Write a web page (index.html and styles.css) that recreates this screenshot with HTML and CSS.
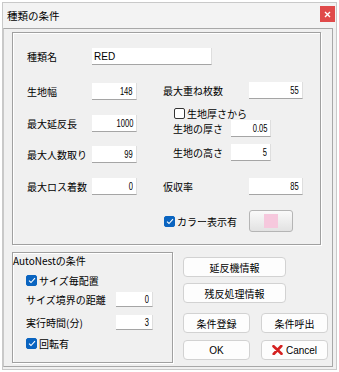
FILE: index.html
```html
<!DOCTYPE html>
<html lang="ja">
<head>
<meta charset="utf-8">
<title>種類の条件</title>
<link rel="stylesheet" href="styles.css">
</head>
<body>
<div class="window">
  <div class="titlebar">
    <span class="title">種類の条件</span>
    <span class="close"><svg width="7" height="7" viewBox="0 0 7 7"><path d="M1 1L6 6M6 1L1 6" stroke="#fff" stroke-width="1.4"/></svg></span>
  </div>
  <div class="client">
    <div class="group top">
      <div class="row name-row">
        <span class="lbl w65">種類名</span>
        <span class="inp wide left">RED</span>
      </div>
      <div class="cols">
        <div class="col left-col">
          <div class="row r1"><span class="lbl w65">生地幅</span><span class="inp w45"><span class="num">148</span></span></div>
          <div class="row r2"><span class="lbl w65">最大延反長</span><span class="inp w45"><span class="num">1000</span></span></div>
          <div class="row r3"><span class="lbl w65">最大人数取り</span><span class="inp w45"><span class="num">99</span></span></div>
          <div class="row r4"><span class="lbl w65">最大ロス着数</span><span class="inp w45"><span class="num">0</span></span></div>
        </div>
        <div class="col right-col">
          <div class="row q1"><span class="lbl w86">最大重ね枚数</span><span class="inp w54"><span class="num">55</span></span></div>
          <div class="row q2 sub"><span class="cb"></span><span class="cbl">生地厚さから</span></div>
          <div class="row q3 sub"><span class="lbl w58">生地の厚さ</span><span class="inp w40"><span class="num">0.05</span></span></div>
          <div class="row q4 sub"><span class="lbl w58">生地の高さ</span><span class="inp w40"><span class="num">5</span></span></div>
          <div class="row q5"><span class="lbl w86">仮収率</span><span class="inp w54"><span class="num">85</span></span></div>
          <div class="row q6">
            <span class="cb on"><svg width="8" height="7" viewBox="0 0 8 7"><path d="M1 3.6L3 5.5L7 1.2" fill="none" stroke="#fff" stroke-width="1.1"/></svg></span>
            <span class="cbl w75">カラー表示有</span>
            <span class="colorbtn"><span class="swatch"></span></span>
          </div>
        </div>
      </div>
    </div>
    <div class="bottom">
      <div class="group autonest">
        <div class="gtitle">AutoNestの条件</div>
        <div class="row a1"><span class="cb on"><svg width="8" height="7" viewBox="0 0 8 7"><path d="M1 3.6L3 5.5L7 1.2" fill="none" stroke="#fff" stroke-width="1.1"/></svg></span><span class="cbl">サイズ毎配置</span></div>
        <div class="row a2"><span class="lbl w90">サイズ境界の距離</span><span class="inp w37 sm"><span class="num">0</span></span></div>
        <div class="row a3"><span class="lbl w90">実行時間(分)</span><span class="inp w37 sm"><span class="num">3</span></span></div>
        <div class="row a4"><span class="cb on"><svg width="8" height="7" viewBox="0 0 8 7"><path d="M1 3.6L3 5.5L7 1.2" fill="none" stroke="#fff" stroke-width="1.1"/></svg></span><span class="cbl">回転有</span></div>
      </div>
      <div class="buttons">
        <button class="btn long b1">延反機情報</button>
        <button class="btn long b2">残反処理情報</button>
        <div class="pair p1">
          <button class="btn short">条件登録</button>
          <button class="btn short">条件呼出</button>
        </div>
        <div class="pair p2">
          <button class="btn short latin">OK</button>
          <button class="btn short latin cancel"><svg class="xicon" width="11" height="10" viewBox="0 0 11 10"><path d="M1.5 1.2L9.5 8.8M9.3 1L1.7 9" stroke="#d42020" stroke-width="2.6" stroke-linecap="round"/></svg>Cancel</button>
        </div>
      </div>
    </div>
  </div>
</div>
</body>
</html>
```
FILE: styles.css
```css
* { box-sizing: border-box; }
body {
  margin: 0;
  background: #ffffff;
  font-family: "Noto Sans CJK JP", "Liberation Sans", sans-serif;
  font-size: 10px;
  color: #000;
}
.window {
  margin: 2px 0 0 2px;
  width: 335px;
  height: 368px;
  border: 1px solid #c9c9c9;
  background: #f0f0f0;
  display: flex;
  flex-direction: column;
}
.titlebar {
  height: 25px;
  flex: none;
  display: flex;
  align-items: center;
  justify-content: space-between;
  padding: 0 1px 0 4px;
  background: #f3f3f3;
}
.title { font-size: 10.5px; line-height: 14px; }
.close {
  width: 15px;
  height: 16px;
  background: #e04a4a;
  display: flex;
  align-items: center;
  justify-content: center;
  margin-top: -3px;
}
.client {
  flex: 1;
  margin: 0 3px 2px 0;
  border: 1px solid #a8a8a8;
  border-left-color: #c9c9c9;
  padding: 3px 0 0 8px;
}
.group {
  border: 1px solid #a0a0a0;
  box-shadow: 1px 1px 0 #ffffff, inset 1px 1px 0 #ffffff;
}
.top {
  width: 309px;
  height: 213px;
  padding: 15px 0 0 14px;
}
.row { display: flex; align-items: center; }
.lbl { flex: none; white-space: nowrap; }
.w65 { width: 65px; }
.w86 { width: 86px; }
.w58 { width: 58px; }
.w90 { width: 90px; }
.inp {
  flex: none;
  height: 17px;
  background: #fff;
  border-bottom: 1px solid #a5a5a5;
  border-right: 1px solid #dedede;
  display: flex;
  align-items: center;
  justify-content: flex-end;
  padding-right: 3px;
  font-family: "Liberation Sans", sans-serif;
}
.inp.left { justify-content: flex-start; padding-left: 2px; font-size: 10px; }
.wide { width: 120px; }
.w45 { width: 45px; }
.w54 { width: 54px; }
.w40 { width: 40px; }
.w37 { width: 37px; }
.inp.sm { height: 15px; }
.num {
  display: inline-block;
  font-size: 10.5px;
  transform: scaleX(0.72);
  transform-origin: right center;
}
.cols { display: flex; gap: 26px; }
.col { display: flex; flex-direction: column; }
.left-col { width: 110px; }
.r1 { margin-top: 18px; }
.r2 { margin-top: 15px; }
.r3 { margin-top: 14px; }
.r4 { margin-top: 15px; }
.q1 { margin-top: 17px; }
.q2 { margin-top: 8px; height: 12px; }
.q3 { margin-top: 1px; }
.q4 { margin-top: 7px; }
.q5 { margin-top: 17px; }
.q6 { margin-top: 15px; height: 22px; padding-left: 1px; }
.sub { padding-left: 10px; }
.q2.sub { padding-left: 11px; }
.cb {
  flex: none;
  width: 11px;
  height: 11px;
  border: 1px solid #333;
  border-radius: 2px;
  background: #fff;
  display: flex;
  align-items: center;
  justify-content: center;
}
.cb.on { background: #0a64c0; border-color: #0a64c0; }
.cbl { margin-left: 2px; white-space: nowrap; }
.w75 { width: 72px; flex: none; }
.colorbtn {
  width: 44px;
  height: 22px;
  border: 1px solid #b5b5b5;
  border-radius: 3px;
  background: linear-gradient(#fafafa, #e2e2e2);
  display: flex;
  align-items: center;
  justify-content: center;
}
.swatch { width: 14px; height: 14px; background: #f6c8dd; }
.bottom { display: flex; margin-top: 7px; }
.autonest {
  width: 161px;
  height: 111px;
  padding: 1px 0 0 0;
}
.gtitle { line-height: 14px; padding-left: 0; font-size: 10px; }
.autonest .row { padding-left: 13px; }
.a1 { margin-top: 5px; height: 14px; }
.a2 { margin-top: 5px; height: 15px; }
.a3 { margin-top: 8px; height: 15px; }
.a4 { margin-top: 6px; height: 14px; }
.buttons {
  margin-left: 10px;
  padding-top: 5px;
  display: flex;
  flex-direction: column;
}
.btn {
  height: 20px;
  border: 1px solid #d2d2d2;
  border-radius: 4px;
  background: #fdfdfd;
  font-family: "Noto Sans CJK JP", sans-serif;
  font-size: 10px;
  color: #000;
  padding: 0;
  display: flex;
  align-items: center;
  justify-content: center;
}
.long { width: 103px; }
.b2 { margin-top: 6px; }
.pair { display: flex; gap: 11px; }
.p1 { margin-top: 10px; }
.p2 { margin-top: 7px; }
.short { width: 67px; }
.latin { font-family: "Liberation Sans", sans-serif; font-size: 10px; }
.xicon { margin-right: 3px; }
```
